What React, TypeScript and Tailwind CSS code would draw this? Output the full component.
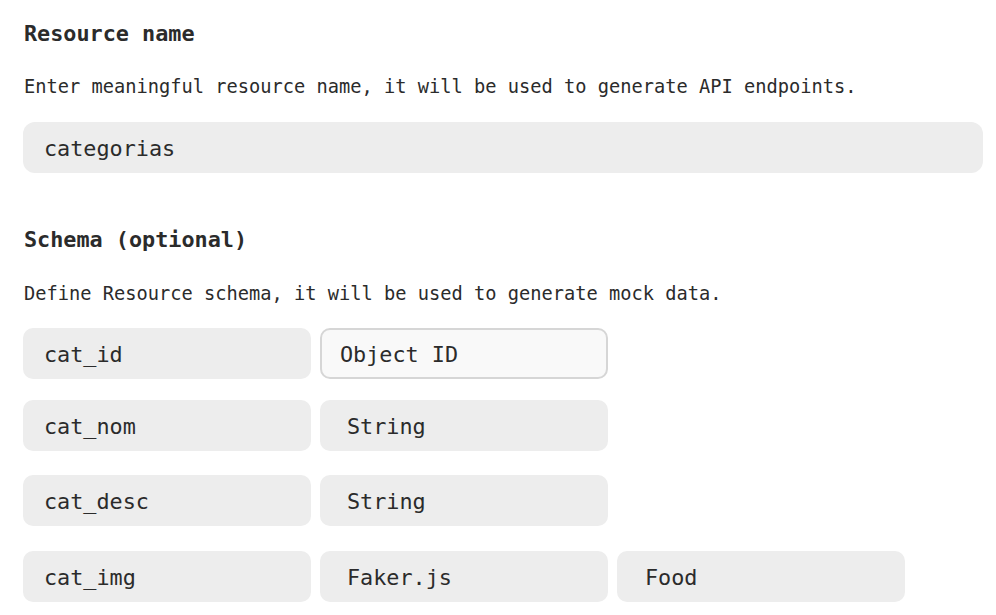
import React from "react"

const mono = "font-['DejaVu_Sans_Mono','Liberation_Mono',monospace]"

const rows = [
  { name: "cat_id", type: "Object ID", focused: true },
  { name: "cat_nom", type: "String" },
  { name: "cat_desc", type: "String" },
  { name: "cat_img", type: "Faker.js", extra: "Food" },
]

const rowGaps = ["mt-[22px]", "mt-[21px]", "mt-[24px]", "mt-[25px]"]

function Box({ children, pad = "pl-[21px]", focused = false }: { children: React.ReactNode; pad?: string; focused?: boolean }) {
  return (
    <div
      className={`flex h-[51px] w-[288px] items-center rounded-[10px] pt-[3px] text-[21.8px] text-[#2b2b2b] ${pad} ${
        focused ? "border-2 border-[#d6d6d6] bg-[#f9f9f9]" : "bg-[#ededed]"
      }`}
    >
      {children}
    </div>
  )
}

export default function App() {
  return (
    <div className={`min-h-[615px] bg-white pl-[24px] pr-[13px] pt-[20px] text-[#2b2b2b] ${mono}`}>
      <h2 className="text-[21.8px] font-bold leading-[28px]">Resource name</h2>
      <p className="mt-[27px] text-[18.7px] leading-[24px]">
        Enter meaningful resource name, it will be used to generate API endpoints.
      </p>
      <div className="-ml-px mt-[23px] flex h-[51px] items-center rounded-[12px] bg-[#ededed] pl-[21px] pt-[3px] text-[21.8px]">
        categorias
      </div>

      <h2 className="mt-[53px] text-[21.8px] font-bold leading-[28px]">Schema (optional)</h2>
      <p className="mt-[28px] text-[18.7px] leading-[24px]">
        Define Resource schema, it will be used to generate mock data.
      </p>

      {rows.map((row, i) => (
        <div key={row.name} className={`-ml-px flex gap-[9px] ${rowGaps[i]}`}>
          <Box>{row.name}</Box>
          <Box focused={row.focused} pad={row.focused ? "pl-[18px]" : "pl-[27px]"}>
            {row.type}
          </Box>
          {row.extra && <Box pad="pl-[28px]">{row.extra}</Box>}
        </div>
      ))}
    </div>
  )
}
